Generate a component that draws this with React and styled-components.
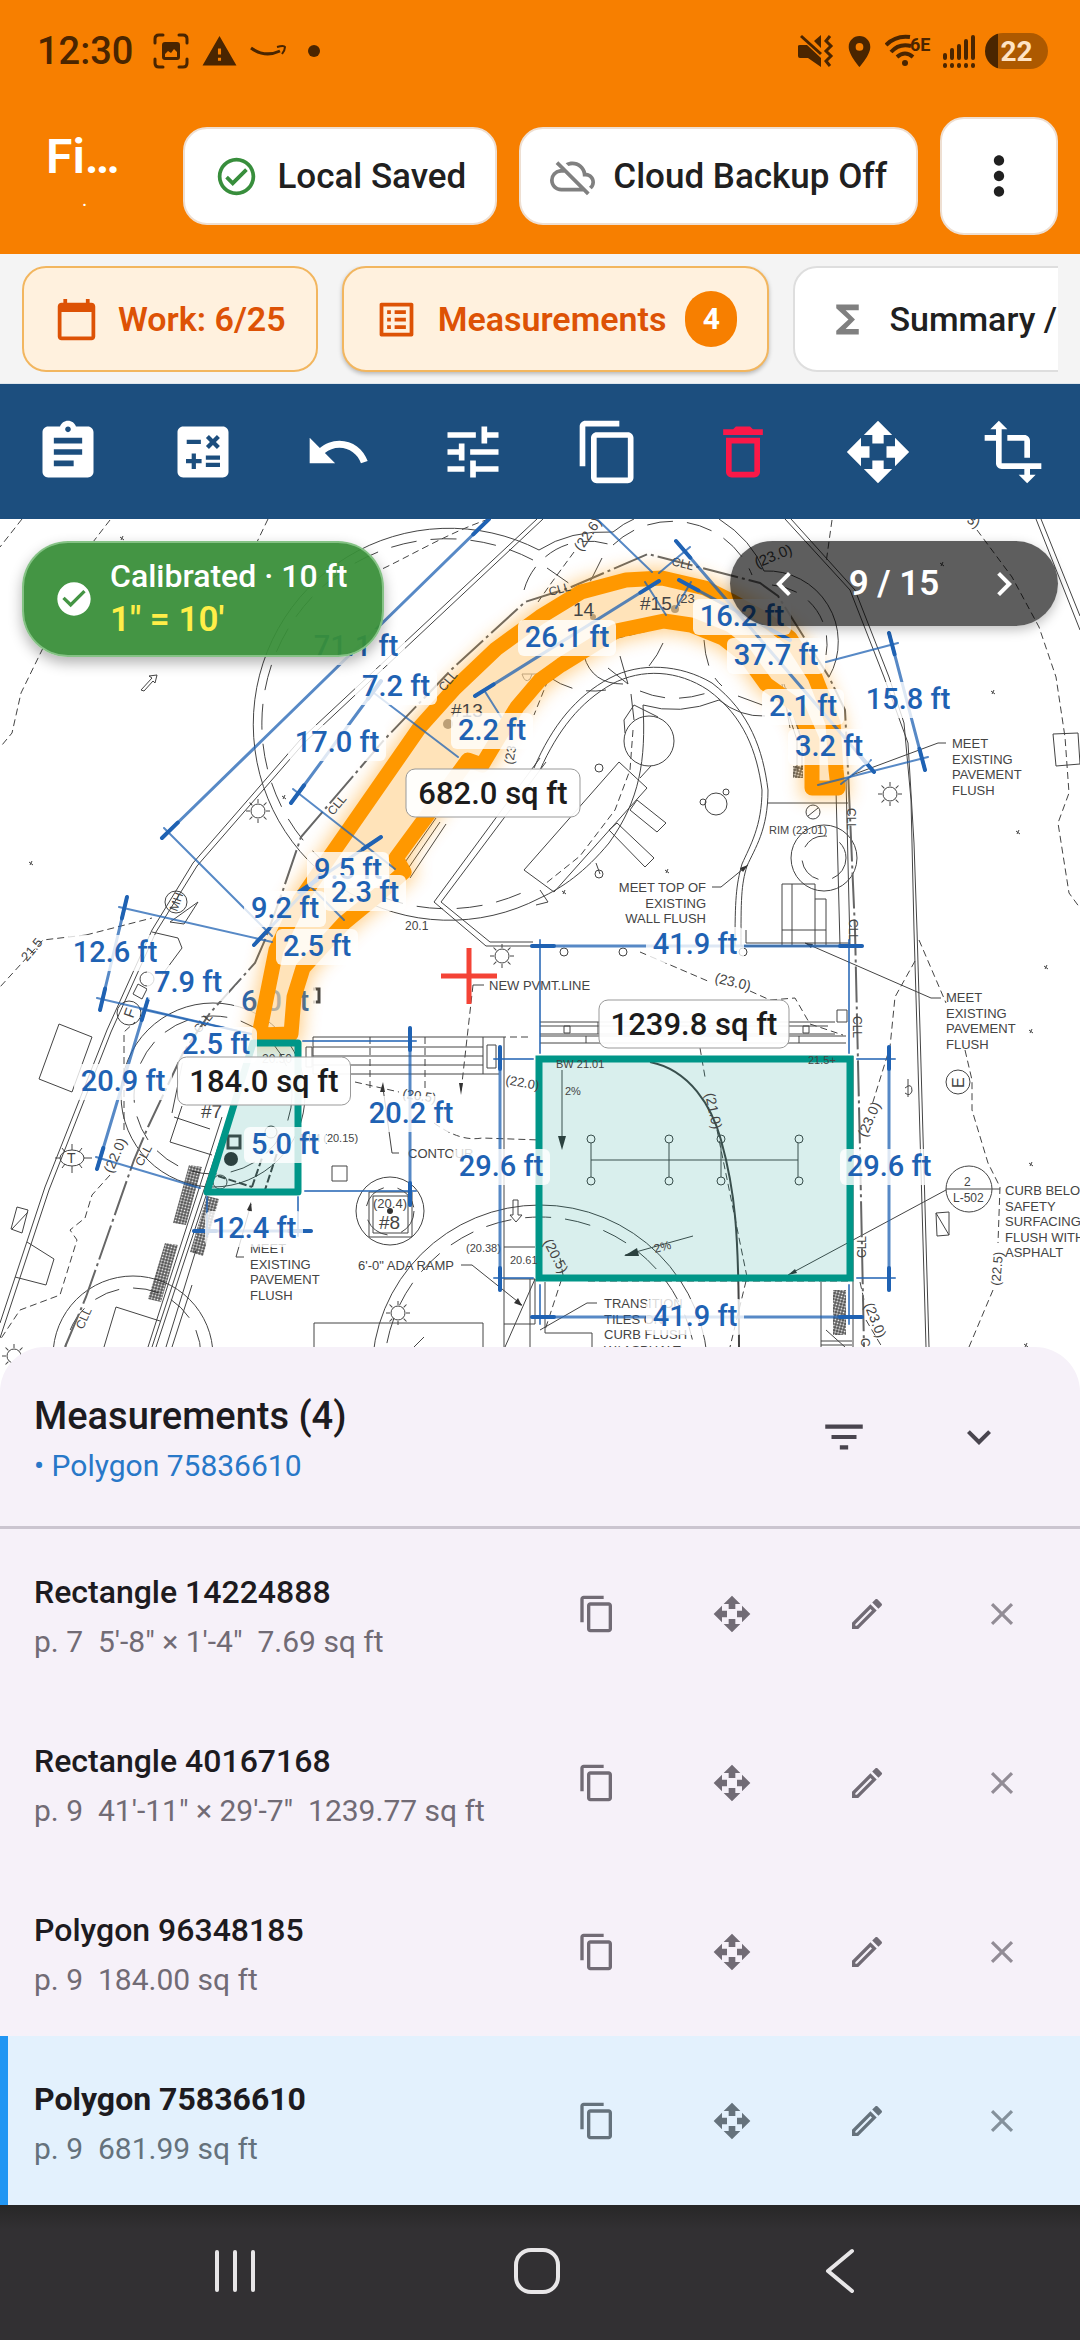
import React from 'react';
import styled, { createGlobalStyle } from 'styled-components';
import {
  MdAssignment,
  MdCalculate,
  MdCalendarToday,
  MdCheckCircle,
  MdChevronLeft,
  MdChevronRight,
  MdClose,
  MdContentCopy,
  MdDeleteOutline,
  MdExpandMore,
  MdFilterList,
  MdFunctions,
  MdLocationOn,
  MdMoreVert,
  MdOpenWith,
  MdOutlineCheckCircle,
  MdOutlineCloudOff,
  MdOutlineEdit,
  MdOutlineListAlt,
  MdTransform,
  MdTune,
  MdUndo,
  MdWarning,
} from 'react-icons/md';

const GlobalStyle = createGlobalStyle`
  * {
    box-sizing: border-box;
  }

  body {
    margin: 0;
    background: #323033;
    font-family: Roboto, 'Liberation Sans', sans-serif;
  }

  button {
    margin: 0;
    padding: 0;
    border: 0;
    background: none;
    color: inherit;
    font: inherit;
  }
`;

const Screen = styled.div`
  display: flex;
  flex-direction: column;
  min-height: 100vh;
  overflow: hidden;
`;

/* ---------- status bar ---------- */

const StatusBar = styled.div`
  display: flex;
  align-items: center;
  justify-content: space-between;
  height: 102px;
  padding: 0 32px 0 37px;
  background: #f77f00;
  color: #4a2500;
`;

const StatusGroup = styled.div`
  display: flex;
  align-items: center;
  gap: ${(props) => props.$gap}px;
`;

const Clock = styled.span`
  font-size: 38px;
  font-weight: 500;
  line-height: 44px;
  margin-right: 8px;
`;

const Battery = styled.span`
  width: 63px;
  height: 36px;
  border-radius: 18px;
  background: linear-gradient(90deg, #4a2500 13px, #ad5900 13px);
  color: #ffe3c4;
  font-size: 28px;
  font-weight: 700;
  line-height: 37px;
  text-align: center;
`;

/* ---------- header ---------- */

const Header = styled.header`
  display: flex;
  align-items: center;
  gap: 22px;
  height: 152px;
  padding: 0 22px 4px 46px;
  background: #f77f00;
`;

const Project = styled.div`
  flex: 1;
  min-width: 0;
  height: 98px;
  color: #fff;
`;

const ProjectName = styled.h1`
  margin: 0;
  font-size: 48px;
  font-weight: 600;
  line-height: 60px;
`;

const ProjectNote = styled.p`
  margin: 0;
  padding-left: 36px;
  font-size: 20px;
  line-height: 24px;
`;

const HeaderButton = styled.button`
  display: flex;
  align-items: center;
  justify-content: center;
  gap: 18px;
  height: ${(props) => (props.$square ? 118 : 98)}px;
  width: ${(props) => (props.$square ? '118px' : 'auto')};
  padding: ${(props) => (props.$square ? 0 : '0 29px')};
  border: 2px solid #eedfd2;
  border-radius: 24px;
  background: #fff;
  color: #202020;
  font-size: 35px;
  font-weight: 500;
  white-space: nowrap;
`;

/* ---------- tabs ---------- */

const Tabs = styled.nav`
  height: 130px;
  padding: 12px 22px 0;
  background: #f4f4f4;
  border-bottom: 1px solid #dfe6ec;
`;

const TabTrack = styled.div`
  display: flex;
  gap: 24px;
  height: 112px;
  overflow: hidden;
`;

const Tab = styled.button`
  display: flex;
  flex: none;
  align-items: center;
  gap: 19px;
  height: 106px;
  padding: 0 30px;
  border: 2px solid ${(props) => (props.$active ? '#f2b65f' : '#dedede')};
  border-radius: 24px;
  background: ${(props) => (props.$active ? '#fff1de' : '#fff')};
  box-shadow: ${(props) => (props.$raised ? '0 2px 4px rgba(0, 0, 0, 0.25)' : 'none')};
  color: ${(props) => (props.$active ? '#dd5205' : '#202020')};
  font-size: 34px;
  font-weight: ${(props) => (props.$active ? 600 : 500)};
  white-space: nowrap;
`;

const Badge = styled.span`
  width: 52px;
  height: 56px;
  border-radius: 28px;
  background: #f77f00;
  color: #fff;
  font-size: 30px;
  font-weight: 700;
  line-height: 56px;
  text-align: center;
`;

/* ---------- toolbar ---------- */

const Toolbar = styled.div`
  display: grid;
  grid-template-columns: repeat(8, 1fr);
  height: 135px;
  background: #1c4e7e;
`;

const Tool = styled.button`
  display: flex;
  align-items: center;
  justify-content: center;
  color: ${(props) => (props.$danger ? '#fb1848' : '#fff')};
`;

/* ---------- plan ---------- */

const PlanArea = styled.main`
  position: relative;
  background: #fff;
`;

const PlanSvg = styled.svg`
  display: block;
  width: 100%;
  height: auto;
  font-family: 'Liberation Sans', Arial, sans-serif;
`;

const Calibration = styled.div`
  position: absolute;
  top: 22px;
  left: 22px;
  display: flex;
  align-items: center;
  gap: 16px;
  height: 116px;
  padding: 0 34px 0 30px;
  border: 2px solid rgba(150, 205, 150, 0.8);
  border-radius: 46px;
  background: rgba(56, 142, 56, 0.94);
  box-shadow: 0 6px 14px rgba(0, 0, 0, 0.3);
  color: #fff;
`;

const CalibrationText = styled.div`
  padding-bottom: 2px;
  font-size: 32px;
  font-weight: 500;
  line-height: 44px;
`;

const Scale = styled.div`
  color: #ffee48;
  font-size: 35px;
  font-weight: 600;
`;

const Pager = styled.div`
  position: absolute;
  top: 22px;
  right: 22px;
  display: flex;
  align-items: center;
  justify-content: space-between;
  width: 328px;
  height: 85px;
  padding: 0 30px;
  border-radius: 43px;
  background: rgba(0, 0, 0, 0.63);
  box-shadow: 0 4px 12px rgba(0, 0, 0, 0.25);
  color: #fff;
  font-size: 35px;
  font-weight: 600;
`;

const PagerButton = styled.button`
  display: flex;
`;

/* ---------- measurements sheet ---------- */

const Sheet = styled.section`
  position: relative;
  margin-top: -45px;
  border-radius: 45px 45px 0 0;
  background: #f6f1f9;
  color: #1d1b20;
`;

const SheetHeader = styled.div`
  display: flex;
  align-items: center;
  height: 182px;
  padding: 0 34px;
  border-bottom: 3px solid #cbc5d0;
`;

const SheetTitle = styled.h2`
  margin: 0;
  font-size: 38px;
  font-weight: 500;
  line-height: 49px;
`;

const Selected = styled.p`
  margin: 0;
  color: #2878c8;
  font-size: 30px;
  line-height: 49px;
`;

const TextBlock = styled.div`
  flex: 1;
  padding-top: ${(props) => (props.$low ? 9 : 6)}px;
`;

const List = styled.ul`
  margin: 0;
  padding: 0;
  list-style: none;
`;

const Row = styled.li`
  display: flex;
  align-items: center;
  height: 169px;
  padding: 0 11px 0 ${(props) => (props.$selected ? 26 : 34)}px;
  border-left: ${(props) => (props.$selected ? '8px solid #2196f3' : 'none')};
  background: ${(props) => (props.$selected ? '#e3f1fd' : 'none')};
  color: ${(props) => (props.$selected ? '#65727c' : '#716b75')};
`;

const RowTitle = styled.h3`
  margin: 0;
  color: #1d1b20;
  font-size: 32px;
  font-weight: ${(props) => (props.$selected ? 700 : 500)};
  line-height: 49px;
`;

const RowNote = styled.p`
  margin: 0;
  font-size: 30px;
  line-height: 49px;
  white-space: pre;
`;

const IconButton = styled.button`
  display: flex;
  align-items: center;
  justify-content: center;
  width: 135px;
  height: 120px;
  opacity: ${(props) => (props.$faint ? 0.75 : 1)};
`;

const SheetButton = styled(IconButton)`
  color: #49454f;
`;

/* ---------- system navigation ---------- */

const SystemNav = styled.nav`
  display: grid;
  grid-template-columns: repeat(3, 1fr);
  height: 135px;
  padding: 0 89px 4px 84px;
  background: linear-gradient(#272727, #323033 24px);
`;

const NavButton = styled.button`
  display: flex;
  align-items: center;
  justify-content: center;
`;

/* ---------- plan data ---------- */

const DIMENSIONS = [
  // main line, then its two extension lines
  [[489, 519, 162, 838], [597, 519, 652, 572], [164, 828, 272, 936]],
  [[381, 681, 291, 803], [370, 690, 458, 757], [293, 789, 395, 869]],
  [[475, 696, 659, 581], [484, 690, 501, 717], [645, 582, 666, 615]],
  [[676, 541, 874, 772], [690, 547, 659, 573], [871, 760, 841, 784]],
  [[679, 580, 790, 640], [691, 582, 676, 608]],
  [[889, 633, 925, 770], [898, 643, 826, 662], [928, 757, 818, 785]],
  [[127, 897, 100, 1010], [119, 907, 272, 942], [97, 998, 251, 1034]],
  [[148, 999, 97, 1169], [140, 1009, 251, 1034], [96, 1157, 200, 1188]],
  [[299, 892, 381, 837], [309, 885, 344, 920]],
  [[254, 945, 320, 875]],
  [[532, 946, 862, 946], [540, 940, 540, 1053], [849, 940, 849, 1053]],
  [[532, 1317, 862, 1317], [540, 1285, 540, 1324], [849, 1285, 849, 1324]],
  [[500, 1047, 500, 1290], [494, 1059, 533, 1059], [494, 1278, 533, 1278]],
  [[889, 1047, 889, 1290], [857, 1059, 895, 1059], [857, 1278, 895, 1278]],
  [[410, 1028, 410, 1205], [303, 1041, 416, 1041], [305, 1191, 416, 1191]],
  [[194, 1231, 311, 1231], [207, 1197, 207, 1236], [298, 1197, 298, 1236]],
];

const LABELS = [
  ['71.1 ft', 356, 656],
  ['7.2 ft', 396, 696],
  ['17.0 ft', 337, 752],
  ['26.1 ft', 567, 647],
  ['2.2 ft', 492, 740],
  ['16.2 ft', 742, 626],
  ['37.7 ft', 776, 665],
  ['2.1 ft', 803, 716],
  ['15.8 ft', 908, 709],
  ['3.2 ft', 829, 756],
  ['9.5 ft', 348, 879],
  ['9.2 ft', 285, 918],
  ['2.3 ft', 365, 902],
  ['2.5 ft', 317, 956],
  ['12.6 ft', 115, 962],
  ['7.9 ft', 188, 992],
  ['2.5 ft', 216, 1054],
  ['20.9 ft', 123, 1091],
  ['20.2 ft', 411, 1123],
  ['5.0 ft', 285, 1154],
  ['12.4 ft', 254, 1238],
  ['41.9 ft', 695, 954],
  ['41.9 ft', 695, 1326],
  ['29.6 ft', 501, 1176],
  ['29.6 ft', 889, 1176],
];

const AREAS = [
  ['682.0 sq ft', 493, 769, 174],
  ['184.0 sq ft', 264, 1057, 173],
  ['1239.8 sq ft', 694, 1000, 190],
];

const NOTES = [
  [['MEET', 'EXISTING', 'PAVEMENT', 'FLUSH'], 952, 748],
  [['MEET', 'EXISTING', 'PAVEMENT', 'FLUSH'], 946, 1002],
  [['MEET', 'EXISTING', 'PAVEMENT', 'FLUSH'], 250, 1253],
  [['MEET TOP OF', 'EXISTING', 'WALL FLUSH'], 706, 892, 'end'],
  [['NEW PVMT.LINE'], 489, 990],
  [['CONTOUR'], 408, 1158],
  [['6\'-0" ADA RAMP'], 358, 1270],
  [['CURB BELOW', 'SAFETY', 'SURFACING', 'FLUSH WITH', 'ASPHALT'], 1005, 1195],
  [['TRANSITION', 'TILES ON', 'CURB FLUSH', 'W/ ASPHALT'], 604, 1308],
];

// text, x, y, rotation, size
const MARKS = [
  ['(22.6)', 581, 552, -55, 14],
  ['CLL', 550, 596, -15, 12],
  ['CLL', 671, 565, 14, 12],
  ['(23.0)', 757, 568, -22, 15],
  ['3)', 966, 522, 30, 14],
  ['14', 573, 616, 0, 19],
  ['#15', 640, 610, 0, 19],
  ['(23', 676, 603, 0, 13],
  ['#13', 451, 717, 0, 19],
  ['CLL', 444, 692, -50, 12],
  ['CLL', 333, 816, -50, 12],
  ['(23', 513, 765, -80, 13],
  ['RIM (23.01)', 769, 834, 0, 11],
  ['CLL', 847, 808, 90, 12],
  ['CLL', 849, 919, 90, 12],
  ['CLL', 853, 1016, 90, 12],
  ['CLL', 866, 1258, -90, 12],
  ['CLL', 861, 1338, 90, 12],
  ['20.1', 405, 930, 0, 12],
  ['21.5', 27, 962, -50, 13],
  ['(23.0)', 714, 982, 14, 14],
  ['(21.0)', 705, 1094, 78, 14],
  ['(20.5)', 543, 1242, 62, 14],
  ['(23.0)', 866, 1138, -66, 14],
  ['(23.0)', 864, 1305, 68, 14],
  ['(22.5)', 1000, 1286, -85, 13],
  ['(22.0)', 505, 1084, 10, 13],
  ['(22.0)', 112, 1174, -66, 14],
  ['(20.5)', 402, 1098, 8, 13],
  ['(20.4)', 373, 1208, 0, 13],
  ['#8', 379, 1229, 0, 19],
  ['#7', 201, 1118, 0, 19],
  ['20.50', 262, 1063, 0, 12],
  ['RIM (20.15)', 300, 1142, 0, 11],
  ['(20.38)', 466, 1252, 0, 11],
  ['20.61', 510, 1264, 0, 11],
  ['BW 21.01', 556, 1068, 0, 11],
  ['21.5+', 808, 1064, 0, 11],
  ['2%', 565, 1095, 0, 11],
  ['2%', 655, 1253, -15, 12],
  ['CLL', 142, 1167, -62, 12],
  ['CLL', 83, 1330, -66, 12],
  ['CLL', 199, 1034, -50, 12],
  ['T', 67, 1163, 0, 14],
  ['MH', 177, 912, -70, 12],
  ['F', 133, 1019, -70, 15],
  ['E', 964, 1088, -90, 16],
  ['2', 964, 1186, 0, 12],
  ['L-502', 953, 1202, 0, 12],
];

const CIRCLES = [
  [649, 741, 25],
  [716, 804, 11],
  [726, 792, 3],
  [703, 802, 3],
  [599, 768, 4],
  [599, 874, 4],
  [813, 812, 7],
  [824, 858, 33],
  [213, 1095, 92],
  [133, 1356, 80],
  [390, 1211, 34],
  [540, 1373, 168],
  [176, 902, 11],
  [129, 1013, 12],
  [958, 1082, 12],
  [969, 1189, 23],
  [147, 979, 7],
  [220, 1182, 7],
  [271, 1132, 6],
  [564, 952, 4],
  [623, 952, 4],
  [743, 952, 4],
];

const DASHED_CIRCLES = [
  [824, 858, 22],
  [213, 1095, 79],
  [133, 1356, 68],
  [390, 1211, 24],
  [540, 1373, 156],
];

// tree canopies merge into one outline, so only the outer arcs are drawn
const CANOPIES = [
  'M539 550 A196 196 0 1 0 540 898',
  'M539 550 Q570 530 613 532 Q624 523 634 519',
  'M719 519 Q752 540 764 571 A71 71 0 0 1 829 677',
  'M643 705 Q680 716 719 700 Q740 717 765 716',
  'M584 656 Q592 684 623 684 M663 643 Q658 655 649 666',
];

const DASHED_CANOPIES = [
  'M533 560 A185 185 0 1 0 530 889',
  'M524 590 A67 67 0 0 1 608 544',
  'M613 545 A86 86 0 0 1 752 575',
  'M549 677 Q575 695 606 690',
  'M640 691 Q675 706 715 690',
  'M772 585 A59 59 0 0 1 826 655',
  'M704 640 Q706 672 722 686 M738 696 L765 706',
  'M547 568 L570 584 M602 558 L590 582',
];

const SUNS = [
  [890, 794],
  [258, 811],
  [502, 956],
  [14, 1356],
  [398, 1313],
];

const SPECKS = [
  [122, 538], [31, 863], [942, 564], [993, 692], [1018, 832], [667, 871], [564, 892],
  [1046, 967], [1031, 1031], [1031, 1164], [1026, 1345], [284, 797],
];

const THIN_PATHS = [
  // property lines and roads
  'M537 519 L300 740 L193 863 L152 930 L107 1030 L45 1187 L0 1323',
  'M543 519 L304 743 L197 866 L156 932 L111 1032 L49 1190 L0 1338',
  'M785 519 L850 590 L884 677 L908 743 L914 843 L917 930 L920 1030 L929 1347',
  'M791 519 L855 590 L889 677 L904 723 L911 800 L914 930 L917 1030 L926 1347',
  'M1036 519 L1080 630',
  'M1041 519 L1080 616',
  // seat wall
  'M534 768 C552 726 576 696 610 678 C640 662 680 664 712 683 C750 712 763 750 768 790 C768 830 755 848 747 866 C741 885 741 900 741 946',
  'M540 770 C558 730 580 702 612 684 C642 668 678 670 708 690 C744 716 757 752 762 790 C762 826 750 846 742 864 C736 885 735 900 735 946',
  'M540 758 L434 902 L486 946 L533 946',
  'M546 762 L441 902 L490 942 L533 942',
  // play equipment
  'M619 762 L647 788 L554 892 L524 870 Z',
  'M630 810 L637 800 L666 823 L657 832 Z',
  'M609 830 L617 823 L654 858 L645 867 Z',
  'M625 733 L624 720 L634 705 L658 717 M640 778 L651 766',
  'M540 890 L548 902 L536 905',
  'M596 863 L600 874',
  'M643 705 C646 760 640 800 609 843 C585 872 562 888 540 898',
  'M620 656 L628 684 M608 668 L628 684 M631 694 L634 720',
  'M767 803 L848 803 M836 790 L840 946 M846 780 L850 946',
  'M782 884 H815 V945 M792 884 V945 M815 899 H826 V945 M782 930 H826 M782 884 V945',
  'M746 930 V943 H850 M741 946 H850',
  'M808 816 L818 808',
  // pavement joints north of the play area
  'M313 1037 H499 M313 1047 H483 M313 1056 H483 M313 1065 H483 M313 1074 H499 M483 1037 V1074 M313 1037 V1074',
  'M487 1045 h9 v23 h-9 z M306 1047 h6 v20 h-6 z',
  'M540 1022 H835 M540 1026 H828 M540 1034 H835 M540 1036 H846 M540 1043 H846 M598 1022 V1034 M586 1036 V1043 M799 1036 V1043',
  'M564 1026 h6 v7 h-6 z M803 1026 h6 v7 h-6 z M837 1010 h10 v12 h-10 z',
  'M504 1037 V1347 M504 1247 H535 M504 1279 H535 V1324 H504 M530 1279 L530 1347 M535 1279 L505 1347 M545 1282 V1333 H592 V1347',
  'M821 1282 V1347 M821 1341 H852 M821 1345 H852 M826 1330 L845 1347 M853 1056 V1347',
  'M314 1347 V1323 H483 V1347 M424 1337 l-10 10 M104 1347 L116 1307 L160 1321',
  // furniture around the left court
  'M59 1024 L92 1037 L72 1092 L39 1079 Z',
  'M172 1113 L183 1060 M174 1117 L210 1129 M170 1142 L212 1155 M182 1106 L170 1142',
  'M369 1192 h43 v45 h-43 z M373 1196 h35 v37 h-35 z',
  'M332 1166 h15 v15 h-15 z',
  'M1053 734 L1078 733 L1080 764 L1056 766 Z',
  'M936 1213 l13 -1 v23 l-12 1 z M936 1213 L949 1235',
  'M17 1207 L28 1210 L22 1233 L11 1229 Z M28 1212 L12 1229',
  'M27 1242 L54 1259 L46 1285 L15 1277',
  'M138 984 L147 989 L142 999 L133 994 Z M152 932 L178 938 L182 948 L162 975',
  'M170 922 L198 902 L184 924 Z',
  'M228 1117 L152 1347 M232 1117 L156 1347 M222 1117 L148 1347 M196 1250 L166 1347 M192 1285 L172 1347',
  'M405 873 L440 822 M401 868 L436 818 M410 878 L446 824',
  'M322 862 L418 732 M326 864 L421 735',
  'M780 688 L797 740 L797 770 M786 688 L802 740 L802 770 M782 684 L790 728 M784 684 L800 736',
  // leaders
  'M946 743 H938 L852 775',
  'M941 998 H931 L805 943',
  'M712 887 H721 L748 865',
  'M484 985 H473',
  'M383 1088 L392 1153 H399',
  'M461 1265 H472 L522 1305',
  'M597 1303 H587 L540 1330',
  'M946 1190 L788 1275 M946 1189 H1000',
  'M251 1204 L236 1257 H244',
  // swing set
  'M591 1160 H798 M591 1143 V1177 M669 1143 V1177 M721 1143 V1177 M798 1143 V1177',
  'M562 1070 V1140',
  'M625 1255 L693 1236',
  // direction arrows and small fixtures
  'M141 690 L152 678 L149 676 L157 675 L155 683 L153 681 L144 691 Z',
  'M513 1200 h5 v15 h4 l-6 7 l-6 -7 h3 z',
  'M905 1080 m3 -1 v18 M905 1088 q7 -6 7 3 q-2 6 -7 2',
  'M522 674 h15 M522 674 q3 10 8 5 l2 -5',
];

const DASHED_PATHS = [
  'M22 519 L0 547',
  'M110 520 L93 542 M43 648 L21 693 L12 733 L2 745',
  'M268 519 L257 542',
  'M489 519 C450 532 410 556 380 570',
  'M86 935 L43 940 L0 987 M86 935 L152 918',
  'M574 552 L552 582 L538 602',
  'M832 520 L826 563',
  'M977 530 L1012 577 L1039 627 L1056 677 L1065 737 L1069 793 L1058 823 L1069 893 L1080 908',
  'M640 952 L710 982 M750 991 L770 1000 L795 998 L810 1024 L843 1035',
  'M919 940 L946 1003',
  'M915 961 L895 997 L890 1047 L872 1105',
  'M965 1050 L972 1080 L972 1110 L988 1163 L1000 1187 L998 1243 M993 1290 L969 1347',
  'M355 1082 L399 1092 M434 1123 Q460 1142 482 1138 L540 1140',
  'M700 1048 L705 1077 M717 1130 L747 1277 L730 1347',
  'M560 1258 L563 1275 L545 1330',
  'M866 1320 L882 1347 M860 1282 L864 1300',
  'M110 1175 L92 1195 L85 1218 L70 1230 L77 1240 L60 1295 L20 1310 L0 1340',
  'M124 1130 L124 1032 L135 1022',
  'M473 985 L461 1092',
  'M370 1037 V1090 M425 1037 V1090 M499 1037 H532',
  'M633 730 L630 770 L615 810 L580 856 L545 884',
  'M548 680 L534 715 M618 638 L660 628',
  'M588 1281 H850',
];

const BOUNDARY =
  'M65 1347 L86 1297 L134 1160 L148 1127 L183 1053 L210 1013 L255 963 L265 940 L282 893 L301 837 L384 740 L451 670 L525 602 L569 588 L648 554 L760 583 L778 596 L829 677 L845 710 L848 770 L855 930 L860 1150 L864 1347';

const HIGHLIGHT =
  'M259 1035 L276 950 L300 900 L331 855 L420 727 L455 688 L496 649 L540 617 L581 592 L626 580 L662 578 L705 588 L733 602 L766 620 L790 638 L815 677 L833 723 L836 770 L838 788 L812 788 L812 740 L797 706 L766 684 L745 655 L723 638 L691 625 L664 621 L616 631 L561 665 L540 680 L517 707 L482 765 L468 760 L396 858 L404 872 L378 895 L344 923 L303 968 L294 997 L291 1034 Z';

const HATCHES = [
  'M189 1165 L202 1167 L186 1225 L173 1223 Z',
  'M207 1196 L219 1199 L203 1256 L190 1252 Z',
  'M165 1243 L178 1245 L161 1302 L148 1299 Z',
  'M833 1290 H846 V1335 H833 Z',
  'M793 766 H803 V778 H793 Z',
];

/* ---------- plan parts ---------- */

const Label = styled.text`
  fill: #1f62b3;
  font-family: Roboto, sans-serif;
  font-size: 29px;
  font-weight: 500;
  text-anchor: middle;
`;

const AreaText = styled(Label)`
  fill: #1c1c1c;
  font-size: 31px;
`;

const Sun = ({ x, y }) => (
  <g transform={`translate(${x} ${y})`}>
    <circle r="7" />
    {[0, 45, 90, 135, 180, 225, 270, 315].map((angle) => (
      <path key={angle} d="M8 0 H12" transform={`rotate(${angle})`} />
    ))}
  </g>
);

// the bold tick sits on the end of the main line
const Dimension = ({ lines }) => {
  const [[x1, y1, x2, y2]] = lines;
  const length = Math.hypot(x2 - x1, y2 - y1);
  const dx = ((x2 - x1) / length) * 22;
  const dy = ((y2 - y1) / length) * 22;
  return (
    <g stroke="#1f62b3" strokeLinecap="round">
      {lines.map(([ax, ay, bx, by], index) => (
        <path
          key={index}
          d={`M${ax} ${ay} L${bx} ${by}`}
          strokeWidth={index === 0 ? 3 : 2}
          opacity="0.75"
        />
      ))}
      <path
        d={`M${x1} ${y1} l${dx} ${dy} M${x2} ${y2} l${-dx} ${-dy}`}
        strokeWidth="4"
      />
    </g>
  );
};

const DimensionLabel = ({ text, x, y }) => {
  const width = text.length > 6 ? 98 : 82;
  return (
    <g>
      <rect x={x - width / 2} y={y - 27} width={width} height="36" rx="6" fill="#fff" opacity="0.8" />
      <Label x={x} y={y}>{text}</Label>
    </g>
  );
};

const Plan = () => (
  <PlanSvg viewBox="0 519 1080 873" role="img" aria-label="Site plan, page 9">
    <defs>
      <pattern id="hatch" width="3" height="3" patternUnits="userSpaceOnUse" patternTransform="rotate(15)">
        <path d="M0 1 H3 M1 0 V3" stroke="#222" strokeWidth="1" />
      </pattern>
      <filter id="glow" x="-20%" y="-20%" width="140%" height="140%">
        <feGaussianBlur stdDeviation="9" />
      </filter>
    </defs>

    <g fill="none" stroke="#444" strokeWidth="1">
      {CIRCLES.map(([cx, cy, r], index) => (
        <circle key={index} cx={cx} cy={cy} r={r} />
      ))}
      {CANOPIES.map((d) => (
        <path key={d} d={d} />
      ))}
      <g strokeDasharray="26 14">
        {DASHED_CIRCLES.map(([cx, cy, r], index) => (
          <circle key={index} cx={cx} cy={cy} r={r} />
        ))}
        {DASHED_CANOPIES.map((d) => (
          <path key={d} d={d} />
        ))}
      </g>
      {THIN_PATHS.map((d) => (
        <path key={d} d={d} />
      ))}
      <g strokeDasharray="7 4">
        {DASHED_PATHS.map((d) => (
          <path key={d} d={d} />
        ))}
      </g>
      <path d={BOUNDARY} strokeDasharray="36 4 3 4" strokeWidth="2" stroke="#666" />
      <path d="M650 1062 C690 1070 712 1107 721 1140 C735 1190 739 1230 739 1347" strokeWidth="2" />
      {SUNS.map(([x, y]) => (
        <Sun key={x} x={x} y={y} />
      ))}
      <ellipse cx="72" cy="1158" rx="12" ry="8" />
      <path d="M55 1158 H60 M84 1158 H92 M72 1144 V1150 M72 1166 V1173 M62 1148 L65 1152 M82 1148 L79 1152 M62 1168 L65 1164 M82 1168 L79 1164" />
      {[591, 669, 721, 799].map((x) => (
        <g key={x}>
          <circle cx={x} cy="1139" r="4" />
          <circle cx={x} cy="1181" r="4" />
        </g>
      ))}
      {SPECKS.map(([x, y]) => (
        <path key={`${x}-${y}`} d={`M${x - 2} ${y - 1} l4 3 M${x + 1} ${y - 2} l-2 4`} />
      ))}
      <path d="M218 1176 L252 1187 M252 1187 L262 1158 M264 1193 L278 1150" strokeDasharray="8 3" strokeWidth="2" />
      <path d="M228 1136 h12 v12 h-12 z M313 989 h6 v13 h-6" strokeWidth="3" />
    </g>

    <g fill="#333">
      {HATCHES.map((d) => (
        <path key={d} d={d} fill="url(#hatch)" />
      ))}
      <path d="M558 1136 H566 L562 1150 Z" />
      <path d="M624 1256 L637 1248 L639 1256 Z" />
      <path d="M788 1275 l7 -6 l2 4 z M805 943 l8 1 l-2 4 z M748 865 l-8 3 l3 4 z M461 1095 l-2 -12 h4 z M383 1082 l-3 10 h5 z M251 1202 l-4 8 l5 2 z M522 1306 l-8 -3 l4 -5 z" />
      <circle cx="231" cy="1159" r="7" />
      <circle cx="390" cy="1211" r="3" />
      <circle cx="593" cy="617" r="3" />
      <circle cx="675" cy="609" r="4" />
      <circle cx="448" cy="724" r="5" />
    </g>

    <g fill="#444">
      {NOTES.map(([lines, x, y, anchor]) => (
        <text key={`${x}-${y}`} fontSize="13" textAnchor={anchor}>
          {lines.map((line, index) => (
            <tspan key={line} x={x} y={y + Math.round(index * 15.6)}>
              {line}
            </tspan>
          ))}
        </text>
      ))}
    </g>

    <DimensionLabel text="6.0 ft" x={275} y={1011} />

    <path d={HIGHLIGHT} fill="#ff9800" stroke="#ff9800" strokeWidth="22" opacity="0.45" filter="url(#glow)" />
    <path d={HIGHLIGHT} fill="#fff" fillOpacity="0.4" stroke="#ff9800" strokeWidth="15" strokeLinejoin="round" />
    <g fill="rgba(0, 150, 136, 0.15)" stroke="#009688" strokeWidth="7" strokeLinejoin="round">
      <path d="M253 1043 H298 V1192 H207 Z" />
      <path d="M539 1059 H850 V1278 H539 Z" strokeLinejoin="miter" />
    </g>

    <g fill="#444">
      {MARKS.map(([text, x, y, angle, size]) => (
        <text key={`${x}-${y}`} fontSize={size} transform={`translate(${x} ${y}) rotate(${angle})`}>
          {text}
        </text>
      ))}
    </g>

    {DIMENSIONS.map((lines, index) => (
      <Dimension key={index} lines={lines} />
    ))}
    {LABELS.map(([text, x, y]) => (
      <DimensionLabel key={`${x}-${y}`} text={text} x={x} y={y} />
    ))}
    {AREAS.map(([text, x, y, width]) => (
      <g key={text}>
        <rect x={x - width / 2} y={y} width={width} height="48" rx="9" fill="#fff" fillOpacity="0.94" stroke="#999" />
        <AreaText x={x} y={y + 35}>{text}</AreaText>
      </g>
    ))}
    <path d="M441 976 H497 M469 948 V1004" stroke="#f44336" strokeWidth="5" />
  </PlanSvg>
);

/* ---------- status bar drawings ---------- */

const CaptureIcon = () => (
  <svg width="36" height="36" viewBox="0 0 36 36" fill="none" stroke="currentColor" strokeWidth="3" strokeLinecap="round">
    <path d="M2 10 V6 Q2 2 6 2 H10 M26 2 H30 Q34 2 34 6 V10 M34 26 V30 Q34 34 30 34 H26 M10 34 H6 Q2 34 2 30 V26" />
    <path d="M12 9 H24 Q27 9 27 12 V24 Q27 27 24 27 H12 Q9 27 9 24 V12 Q9 9 12 9 Z M12 24 H24 V19 L21 16 L18 20 L15 18 L12 21 Z" fill="currentColor" fillRule="evenodd" stroke="none" />
  </svg>
);

const SmileIcon = () => (
  <svg width="36" height="12" viewBox="0 0 36 12" fill="none" stroke="currentColor" strokeWidth="3">
    <path d="M1 3 Q15 13 30 6" />
    <path d="M27 2 Q34 0 35 2 Q35 5 32 9" strokeWidth="2" />
  </svg>
);

const MutedIcon = () => (
  <svg width="36" height="34" viewBox="0 0 36 34" fill="currentColor">
    <path d="M0 12 Q0 11 2 11 H9 L23 24 V33 L10 24 H2 Q0 24 0 22 Z M16 7 L23 1 V14 Z" />
    <path d="M3 2 L23 20" stroke="currentColor" strokeWidth="3" />
    <path d="M32 2 L28 7 L33 12 L28 17 L33 22 L28 27 L32 32" fill="none" stroke="currentColor" strokeWidth="3" />
  </svg>
);

const WifiIcon = () => (
  <svg width="48" height="34" viewBox="0 0 48 34" fill="none" stroke="currentColor" strokeWidth="4">
    <path d="M1 11 Q11 1 25 3 M6 18 Q14 9 26 12 M12 23 Q20 16 28 23" />
    <circle cx="20" cy="29" r="3" fill="currentColor" stroke="none" />
    <text x="25" y="17" fill="currentColor" stroke="none" fontFamily="Roboto, sans-serif" fontSize="18" fontWeight="700">
      6E
    </text>
  </svg>
);

const SignalIcon = () => (
  <svg width="32" height="36" viewBox="0 0 32 36" stroke="currentColor" strokeWidth="4" strokeLinecap="round">
    <path d="M2 22 V25 M9 17 V25 M16 13 V25 M23 8 V25 M30 4 V25" />
    <path d="M2 32 V33 M9 32 V33 M16 32 V33 M23 32 V33 M30 32 V33" />
  </svg>
);

const Dot = () => (
  <svg width="12" height="12" viewBox="0 0 12 12" fill="currentColor">
    <circle cx="6" cy="6" r="6" />
  </svg>
);

/* ---------- screen ---------- */

const TOOLS = [
  ['Takeoff sheet', MdAssignment],
  ['Calculator', MdCalculate],
  ['Undo', MdUndo],
  ['Settings', MdTune],
  ['Duplicate', MdContentCopy],
  ['Delete', MdDeleteOutline, true],
  ['Move', MdOpenWith],
  ['Transform', MdTransform],
];

const MEASUREMENTS = [
  { name: 'Rectangle 14224888', note: 'p. 7  5\'-8" × 1\'-4"  7.69 sq ft' },
  { name: 'Rectangle 40167168', note: 'p. 9  41\'-11" × 29\'-7"  1239.77 sq ft' },
  { name: 'Polygon 96348185', note: 'p. 9  184.00 sq ft' },
  { name: 'Polygon 75836610', note: 'p. 9  681.99 sq ft', selected: true },
];

const App = () => {
  return (
    <Screen>
      <GlobalStyle />
      <StatusBar>
        <StatusGroup $gap={12}>
          <Clock>12:30</Clock>
          <CaptureIcon />
          <MdWarning size={37} />
          <SmileIcon />
          <StatusGroup $gap={10}>
            <span />
            <Dot />
          </StatusGroup>
        </StatusGroup>
        <StatusGroup $gap={10}>
          <StatusGroup $gap={7}>
            <MutedIcon />
            <MdLocationOn size={37} />
            <WifiIcon />
          </StatusGroup>
          <SignalIcon />
          <Battery>22</Battery>
        </StatusGroup>
      </StatusBar>

      <Header>
        <Project>
          <ProjectName>Fi…</ProjectName>
          <ProjectNote>.</ProjectNote>
        </Project>
        <HeaderButton>
          <MdOutlineCheckCircle size={45} color="#388e3c" />
          Local Saved
        </HeaderButton>
        <HeaderButton>
          <MdOutlineCloudOff size={45} color="#808080" />
          Cloud Backup Off
        </HeaderButton>
        <HeaderButton $square aria-label="More options">
          <MdMoreVert size={62} />
        </HeaderButton>
      </Header>

      <Tabs>
        <TabTrack>
          <Tab $active>
            <MdCalendarToday size={45} />
            Work: 6/25
          </Tab>
          <Tab $active $raised>
            <MdOutlineListAlt size={45} />
            Measurements
            <Badge>4</Badge>
          </Tab>
          <Tab>
            <MdFunctions size={45} color="#808080" />
            Summary /
          </Tab>
        </TabTrack>
      </Tabs>

      <Toolbar>
        {TOOLS.map(([name, Icon, danger]) => (
          <Tool key={name} aria-label={name} $danger={danger}>
            <Icon size={68} />
          </Tool>
        ))}
      </Toolbar>

      <PlanArea>
        <Plan />
        <Calibration>
          <MdCheckCircle size={40} />
          <CalibrationText>
            Calibrated · 10 ft
            <Scale>1" = 10'</Scale>
          </CalibrationText>
        </Calibration>
        <Pager>
          <PagerButton aria-label="Previous page">
            <MdChevronLeft size={48} />
          </PagerButton>
          9 / 15
          <PagerButton aria-label="Next page">
            <MdChevronRight size={48} />
          </PagerButton>
        </Pager>
      </PlanArea>

      <Sheet>
        <SheetHeader>
          <TextBlock $low>
            <SheetTitle>Measurements (4)</SheetTitle>
            <Selected>• Polygon 75836610</Selected>
          </TextBlock>
          <SheetButton aria-label="Filter">
            <MdFilterList size={50} />
          </SheetButton>
          <SheetButton aria-label="Collapse">
            <MdExpandMore size={48} />
          </SheetButton>
        </SheetHeader>
        <List>
          {MEASUREMENTS.map(({ name, note, selected }) => (
            <Row key={name} $selected={selected}>
              <TextBlock>
                <RowTitle $selected={selected}>{name}</RowTitle>
                <RowNote>{note}</RowNote>
              </TextBlock>
              <IconButton aria-label="Duplicate">
                <MdContentCopy size={40} />
              </IconButton>
              <IconButton aria-label="Move">
                <MdOpenWith size={40} />
              </IconButton>
              <IconButton aria-label="Edit">
                <MdOutlineEdit size={40} />
              </IconButton>
              <IconButton aria-label="Remove" $faint>
                <MdClose size={38} />
              </IconButton>
            </Row>
          ))}
        </List>
      </Sheet>

      <SystemNav>
        <NavButton aria-label="Recent apps">
          <svg width="46" height="46" viewBox="0 0 46 46" stroke="#e8e6e8" strokeWidth="4" strokeLinecap="round">
            <path d="M5 4 V42 M23 4 V42 M41 4 V42" />
          </svg>
        </NavButton>
        <NavButton aria-label="Home">
          <svg width="46" height="46" viewBox="0 0 46 46" fill="none" stroke="#e8e6e8" strokeWidth="4">
            <rect x="2" y="2" width="42" height="42" rx="15" />
          </svg>
        </NavButton>
        <NavButton aria-label="Back">
          <svg width="46" height="46" viewBox="0 0 46 46" fill="none" stroke="#e8e6e8" strokeWidth="4" strokeLinecap="round" strokeLinejoin="round">
            <path d="M35 3 L11 23 L35 43" />
          </svg>
        </NavButton>
      </SystemNav>
    </Screen>
  );
};

export default App;
